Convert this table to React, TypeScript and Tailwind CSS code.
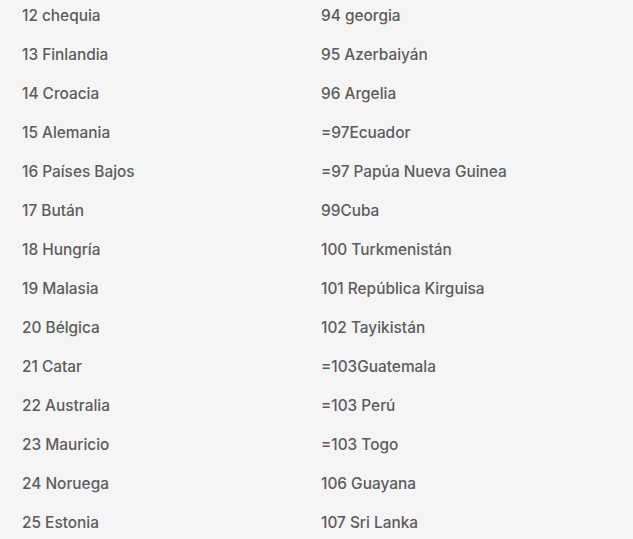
const left = [
  "12 chequia",
  "13 Finlandia",
  "14 Croacia",
  "15 Alemania",
  "16 Países Bajos",
  "17 Bután",
  "18 Hungría",
  "19 Malasia",
  "20 Bélgica",
  "21 Catar",
  "22 Australia",
  "23 Mauricio",
  "24 Noruega",
  "25 Estonia",
];

const right = [
  "94 georgia",
  "95 Azerbaiyán",
  "96 Argelia",
  "=97Ecuador",
  "=97 Papúa Nueva Guinea",
  "99Cuba",
  "100 Turkmenistán",
  "101 República Kirguisa",
  "102 Tayikistán",
  "=103Guatemala",
  "=103 Perú",
  "=103 Togo",
  "106 Guayana",
  "107 Sri Lanka",
];

export default function App() {
  return (
    <div className="w-[633px] h-[539px] overflow-hidden bg-[#f5f5f5] font-['Inter',sans-serif] text-[15.4px] font-medium text-[#5c5c5c]">
      <div className="grid grid-cols-[299px_1fr] pl-[22px] pt-[6px]">
        <ul className="flex flex-col gap-y-[19px]">
          {left.map((t) => (
            <li key={t} className="leading-[20px]">{t}</li>
          ))}
        </ul>
        <ul className="flex flex-col gap-y-[19px]">
          {right.map((t) => (
            <li key={t} className="leading-[20px]">{t}</li>
          ))}
        </ul>
      </div>
    </div>
  );
}
